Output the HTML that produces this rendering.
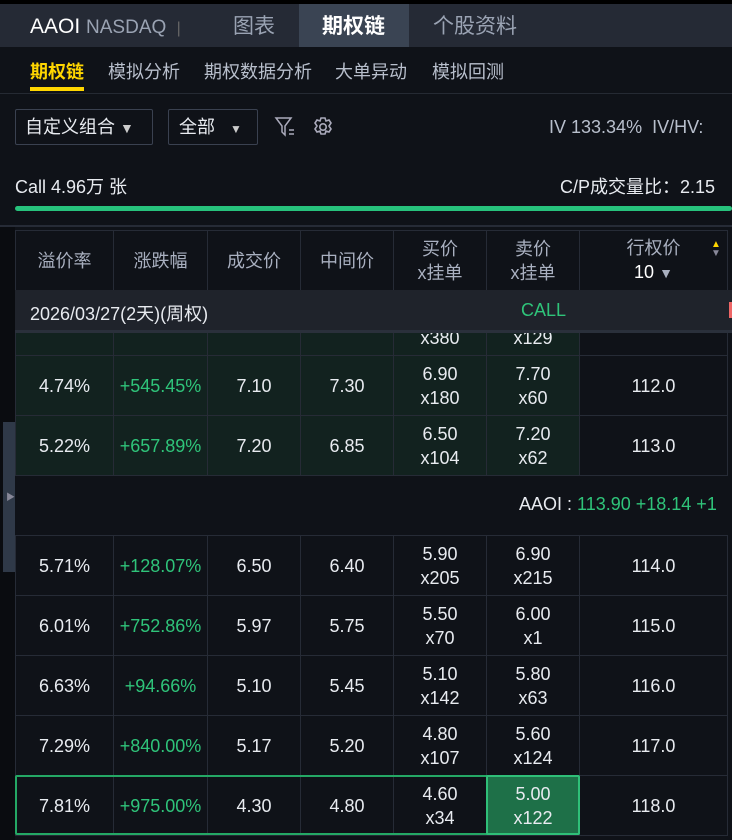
<!DOCTYPE html>
<html><head><meta charset="utf-8"><style>
*{margin:0;padding:0;box-sizing:border-box}
body{width:732px;height:840px;overflow:hidden;background:#0f1218;font-family:"Liberation Sans","Noto Sans CJK SC",sans-serif;color:#e8ebf0;position:relative}
.a{position:absolute}
.top{left:0;top:0;width:732px;height:47px;background:#252a35}
.t{top:0;height:47px;line-height:53px;font-size:21px;color:#9aa3b3}
.sub{font-size:18px;color:#b8bfcc;top:58px}
.g{color:#2fc47a}
table{position:absolute;left:15px;border-collapse:collapse;table-layout:fixed}
td{border:1px solid #262b36;text-align:center;font-size:18px;height:60px;line-height:24px;padding:0}
.hd td{color:#a9b0c0;height:60px}
.itm td.c{background:#12221f}
</style></head><body>
<div class="a top"></div>
<div class="a" style="left:0;top:0;width:732px;height:4px;background:#000"></div>
<div class="a t" style="left:30px;color:#fff;font-size:21px">AAOI <span style="color:#9aa3b3;font-size:19px">NASDAQ</span> <span style="color:#666;font-size:16px">&nbsp;|</span></div>
<div class="a t" style="left:233px">图表</div>
<div class="a" style="left:299px;top:4px;width:110px;height:43px;background:#3a4453"></div>
<div class="a t" style="left:322px;color:#fff;font-weight:bold">期权链</div>
<div class="a t" style="left:433px">个股资料</div>
<div class="a sub" style="left:30px;color:#ffd600;font-weight:bold">期权链</div>
<div class="a" style="left:30px;top:87px;width:54px;height:4px;background:#ffd600"></div>
<div class="a sub" style="left:108px">模拟分析</div>
<div class="a sub" style="left:204px">期权数据分析</div>
<div class="a sub" style="left:335px">大单异动</div>
<div class="a sub" style="left:432px">模拟回测</div>
<div class="a" style="left:0;top:93px;width:732px;height:1px;background:#252a33"></div>
<div class="a" style="left:15px;top:109px;width:138px;height:36px;border:1px solid #3a4150;border-radius:2px;font-size:18px;line-height:34px;padding-left:9px">自定义组合 <span style="font-size:14px;color:#ccc">▼</span></div>
<div class="a" style="left:168px;top:109px;width:90px;height:36px;border:1px solid #3a4150;border-radius:2px;font-size:18px;line-height:34px;padding-left:10px">全部 <span style="font-size:12px;color:#ccc">&nbsp;&nbsp;&nbsp;▼</span></div>
<svg class="a" style="left:274px;top:116px" width="24" height="22" viewBox="0 0 24 22" fill="none" stroke="#aab" stroke-width="1.5"><path d="M2 2h15l-6 8v9l-3-3v-6z"/><path d="M15 14h5M15 18h5"/></svg>
<svg class="a" style="left:312px;top:116px" width="22" height="22" viewBox="0 0 22 22" fill="none" stroke="#aab" stroke-width="1.6"><path d="M9 2h4l1 3 3-1 2 3-2 3 2 3-2 3-3-1-1 3H9l-1-3-3 1-2-3 2-3-2-3 2-3 3 1z"/><circle cx="11" cy="11" r="3.2"/></svg>
<div class="a" style="left:549px;top:117px;font-size:18px;color:#b8bfcc;white-space:nowrap">IV 133.34% &nbsp;IV/HV:</div>
<div class="a" style="left:15px;top:173px;font-size:18px">Call 4.96万 张</div>
<div class="a" style="left:560px;top:173px;font-size:18px;white-space:nowrap">C/P成交量比：2.15</div>
<div class="a" style="left:15px;top:206px;width:717px;height:5px;background:#27c27c;border-radius:3px"></div>
<div class="a" style="left:0;top:225px;width:732px;height:2px;background:#262b36"></div>
<div class="a" style="left:0;top:227px;width:15px;height:613px;background:#0a0c10"></div>
<div class="a" style="left:3px;top:422px;width:12px;height:150px;background:#2f3948"></div>
<div class="a" style="left:6px;top:490px;font-size:9px;color:#889">▶</div>
<table style="top:230px"><colgroup><col style="width:98px"><col style="width:94px"><col style="width:93px"><col style="width:93px"><col style="width:93px"><col style="width:93px"><col style="width:148px"></colgroup>
<tr class="hd"><td>溢价率</td><td>涨跌幅</td><td>成交价</td><td>中间价</td><td>买价<br>x挂单</td><td>卖价<br>x挂单</td><td>行权价<br><span style="color:#fff">10</span> <span style="font-size:14px">▼</span></td></tr></table>
<div class="a" style="left:711px;top:240px;font-size:10px;line-height:9px;color:#ffd600">▲<br><span style="color:#889">▼</span></div>
<div class="a" style="left:15px;top:290px;width:717px;height:43px;background:#1f232b;border-bottom:3px solid #2a303b"></div>
<div class="a" style="left:30px;top:300px;font-size:18px">2026/03/27(2天)(周权)</div>
<div class="a g" style="left:521px;top:300px;font-size:18px">CALL</div>
<div class="a" style="left:729px;top:302px;width:3px;height:16px;background:#e66"></div>
<div class="a" style="left:0;top:333px;width:732px;height:22px;overflow:hidden">
<table style="top:-38px"><colgroup><col style="width:98px"><col style="width:94px"><col style="width:93px"><col style="width:93px"><col style="width:93px"><col style="width:93px"><col style="width:148px"></colgroup>
<tr class="itm"><td class="c"></td><td class="c"></td><td class="c"></td><td class="c"></td><td class="c">7.00<br>x380</td><td class="c">7.80<br>x129</td><td></td></tr></table></div>
<table style="top:355px"><colgroup><col style="width:98px"><col style="width:94px"><col style="width:93px"><col style="width:93px"><col style="width:93px"><col style="width:93px"><col style="width:148px"></colgroup>
<tr class="itm"><td class="c">4.74%</td><td class="c g">+545.45%</td><td class="c">7.10</td><td class="c">7.30</td><td class="c">6.90<br>x180</td><td class="c">7.70<br>x60</td><td>112.0</td></tr>
<tr class="itm"><td class="c">5.22%</td><td class="c g">+657.89%</td><td class="c">7.20</td><td class="c">6.85</td><td class="c">6.50<br>x104</td><td class="c">7.20<br>x62</td><td>113.0</td></tr>
</table>
<div class="a" style="left:519px;top:494px;font-size:18px;white-space:nowrap">AAOI : <span class="g">113.90 +18.14 +1</span></div>
<table style="top:535px"><colgroup><col style="width:98px"><col style="width:94px"><col style="width:93px"><col style="width:93px"><col style="width:93px"><col style="width:93px"><col style="width:148px"></colgroup>
<tr><td>5.71%</td><td class="g">+128.07%</td><td>6.50</td><td>6.40</td><td>5.90<br>x205</td><td>6.90<br>x215</td><td>114.0</td></tr>
<tr><td>6.01%</td><td class="g">+752.86%</td><td>5.97</td><td>5.75</td><td>5.50<br>x70</td><td>6.00<br>x1</td><td>115.0</td></tr>
<tr><td>6.63%</td><td class="g">+94.66%</td><td>5.10</td><td>5.45</td><td>5.10<br>x142</td><td>5.80<br>x63</td><td>116.0</td></tr>
<tr><td>7.29%</td><td class="g">+840.00%</td><td>5.17</td><td>5.20</td><td>4.80<br>x107</td><td>5.60<br>x124</td><td>117.0</td></tr>
<tr><td>7.81%</td><td class="g">+975.00%</td><td>4.30</td><td>4.80</td><td>4.60<br>x34</td><td style="background:#1e7048">5.00<br>x122</td><td>118.0</td></tr>
</table>
<div class="a" style="left:15px;top:775px;width:565px;height:60px;border:2px solid #24a865;border-radius:2px"></div>
<div class="a" style="left:486px;top:775px;width:94px;height:60px;border:2px solid #2fbf78;border-radius:2px"></div>
</body></html>
